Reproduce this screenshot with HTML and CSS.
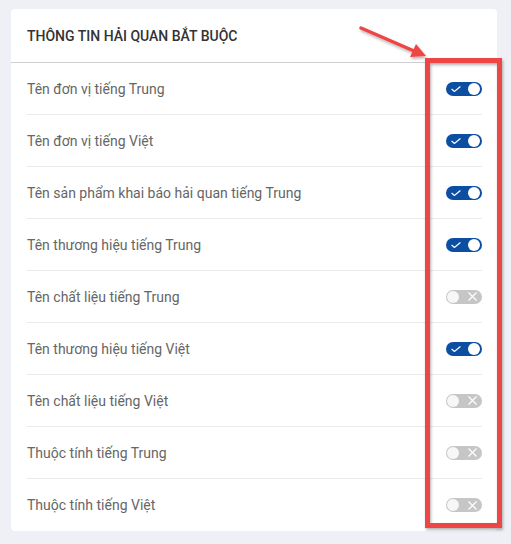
FILE: index.html
```html
<!DOCTYPE html>
<html lang="vi">
<head>
<meta charset="utf-8">
<link rel="stylesheet" href="styles.css">
</head>
<body>
<div class="card">
  <div class="card-head">THÔNG TIN HẢI QUAN BẮT BUỘC</div>
  <div class="rows">
    <div class="row"><span>Tên đơn vị tiếng Trung</span><span class="tg on"><svg class="ic ck" viewBox="0 0 10 6"><path d="M0.6 3 L3.4 5.5 L9.4 0.5"/></svg><i class="knob"></i></span></div>
    <div class="row"><span>Tên đơn vị tiếng Việt</span><span class="tg on"><svg class="ic ck" viewBox="0 0 10 6"><path d="M0.6 3 L3.4 5.5 L9.4 0.5"/></svg><i class="knob"></i></span></div>
    <div class="row"><span>Tên sản phẩm khai báo hải quan tiếng Trung</span><span class="tg on"><svg class="ic ck" viewBox="0 0 10 6"><path d="M0.6 3 L3.4 5.5 L9.4 0.5"/></svg><i class="knob"></i></span></div>
    <div class="row"><span>Tên thương hiệu tiếng Trung</span><span class="tg on"><svg class="ic ck" viewBox="0 0 10 6"><path d="M0.6 3 L3.4 5.5 L9.4 0.5"/></svg><i class="knob"></i></span></div>
    <div class="row"><span>Tên chất liệu tiếng Trung</span><span class="tg off"><i class="knob"></i><svg class="ic x" viewBox="0 0 9 9"><path d="M0.5 0.5 L8.5 8.5 M8.5 0.5 L0.5 8.5"/></svg></span></div>
    <div class="row"><span>Tên thương hiệu tiếng Việt</span><span class="tg on"><svg class="ic ck" viewBox="0 0 10 6"><path d="M0.6 3 L3.4 5.5 L9.4 0.5"/></svg><i class="knob"></i></span></div>
    <div class="row"><span>Tên chất liệu tiếng Việt</span><span class="tg off"><i class="knob"></i><svg class="ic x" viewBox="0 0 9 9"><path d="M0.5 0.5 L8.5 8.5 M8.5 0.5 L0.5 8.5"/></svg></span></div>
    <div class="row"><span>Thuộc tính tiếng Trung</span><span class="tg off"><i class="knob"></i><svg class="ic x" viewBox="0 0 9 9"><path d="M0.5 0.5 L8.5 8.5 M8.5 0.5 L0.5 8.5"/></svg></span></div>
    <div class="row"><span>Thuộc tính tiếng Việt</span><span class="tg off"><i class="knob"></i><svg class="ic x" viewBox="0 0 9 9"><path d="M0.5 0.5 L8.5 8.5 M8.5 0.5 L0.5 8.5"/></svg></span></div>
  </div>
</div>
<svg class="annot" viewBox="0 0 511 544" width="511" height="544">
  <defs>
    <filter id="sh" x="-20%" y="-20%" width="140%" height="140%">
      <feDropShadow dx="1" dy="2" stdDeviation="1.5" flood-color="#000" flood-opacity="0.3"/>
    </filter>
  </defs>
  <g filter="url(#sh)">
    <rect x="427.5" y="60.5" width="72" height="465" fill="none" stroke="#ee4444" stroke-width="5"/>
    <path d="M361 28 L414 51" stroke="#ee4444" stroke-width="3.5" stroke-linecap="round" fill="none"/>
    <path d="M426 56 L410 57 L416 44 Z" fill="#ee4444"/>
  </g>
</svg>
</body>
</html>
```
FILE: styles.css
```css
html, body {
  margin: 0;
  padding: 0;
}
body {
  background: #eef0f5;
  width: 511px;
  height: 544px;
  padding: 9px 14px 0 11px;
  box-sizing: border-box;
  font-family: Roboto, "Liberation Sans", sans-serif;
  position: relative;
  overflow: hidden;
}
.card {
  background: #fff;
  border-radius: 4px;
  width: 486px;
}
.card-head {
  height: 54px;
  box-sizing: border-box;
  padding: 19px 16px 0;
  font-size: 14px;
  font-weight: 500;
  color: #333;
  border-bottom: 1px solid #cfcfcf;
}
.rows {
  padding: 0 15px 0 16px;
}
.row {
  height: 52px;
  box-sizing: border-box;
  display: flex;
  align-items: center;
  justify-content: space-between;
  border-bottom: 1px solid #ebebeb;
  font-size: 14px;
  color: #666;
}
.row:last-child {
  border-bottom: none;
  height: 52px;
}
.tg {
  width: 36px;
  height: 14px;
  border-radius: 7px;
  display: flex;
  align-items: center;
  justify-content: space-between;
  box-sizing: border-box;
}
.tg.on {
  background: #0b4ea2;
  padding: 0 2px 0 5px;
}
.tg.off {
  background: #c6c6c6;
  padding: 0 5px 0 1px;
}
.knob {
  width: 12px;
  height: 12px;
  border-radius: 50%;
  background: #fff;
  display: block;
}
.tg.off .knob {
  background: #f7f7f7;
}
.ic {
  fill: none;
  stroke: #fff;
  stroke-width: 1.2;
  display: block;
}
.ic.ck {
  width: 10px;
  height: 6px;
}
.ic.x {
  width: 9px;
  height: 9px;
}
.annot {
  position: absolute;
  left: 0;
  top: 0;
  pointer-events: none;
}
```
